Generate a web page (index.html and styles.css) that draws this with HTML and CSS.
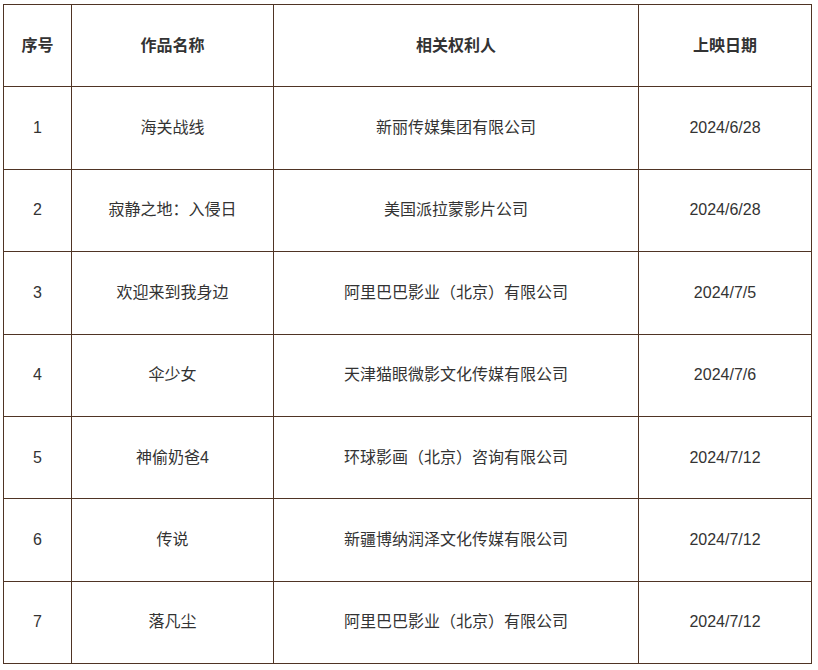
FILE: index.html
```html
<!DOCTYPE html>
<html lang="zh-CN">
<head>
<meta charset="utf-8">
<title>影片列表</title>
<link rel="stylesheet" href="styles.css">
</head>
<body>
<div class="wrap">
<table class="films">
  <colgroup>
    <col class="c-no">
    <col class="c-name">
    <col class="c-owner">
    <col class="c-date">
  </colgroup>
  <thead>
    <tr><th>序号</th><th>作品名称</th><th>相关权利人</th><th>上映日期</th></tr>
  </thead>
  <tbody>
    <tr><td>1</td><td>海关战线</td><td>新丽传媒集团有限公司</td><td>2024/6/28</td></tr>
    <tr><td>2</td><td>寂静之地：入侵日</td><td>美国派拉蒙影片公司</td><td>2024/6/28</td></tr>
    <tr><td>3</td><td>欢迎来到我身边</td><td>阿里巴巴影业（北京）有限公司</td><td>2024/7/5</td></tr>
    <tr><td>4</td><td>伞少女</td><td>天津猫眼微影文化传媒有限公司</td><td>2024/7/6</td></tr>
    <tr><td>5</td><td>神偷奶爸4</td><td>环球影画（北京）咨询有限公司</td><td>2024/7/12</td></tr>
    <tr><td>6</td><td>传说</td><td>新疆博纳润泽文化传媒有限公司</td><td>2024/7/12</td></tr>
    <tr><td>7</td><td>落凡尘</td><td>阿里巴巴影业（北京）有限公司</td><td>2024/7/12</td></tr>
  </tbody>
</table>
</div>
</body>
</html>
```

FILE: styles.css
```css
html, body {
  margin: 0;
  padding: 0;
  background: #ffffff;
}
.wrap {
  padding: 4px 0 0 3px;
}
.films {
  border-collapse: collapse;
  table-layout: fixed;
  width: 809px;
  font-family: "Liberation Sans", "Noto Sans CJK SC", sans-serif;
  font-size: 16px;
  color: #333333;
}
.c-no { width: 68px; }
.c-name { width: 202px; }
.c-owner { width: 365px; }
.c-date { width: 173px; }
.films th,
.films td {
  border: 1px solid #4f3424;
  text-align: center;
  vertical-align: middle;
  padding: 0;
  height: 81.375px;
  line-height: 22px;
}
.films th {
  font-weight: bold;
}
```
